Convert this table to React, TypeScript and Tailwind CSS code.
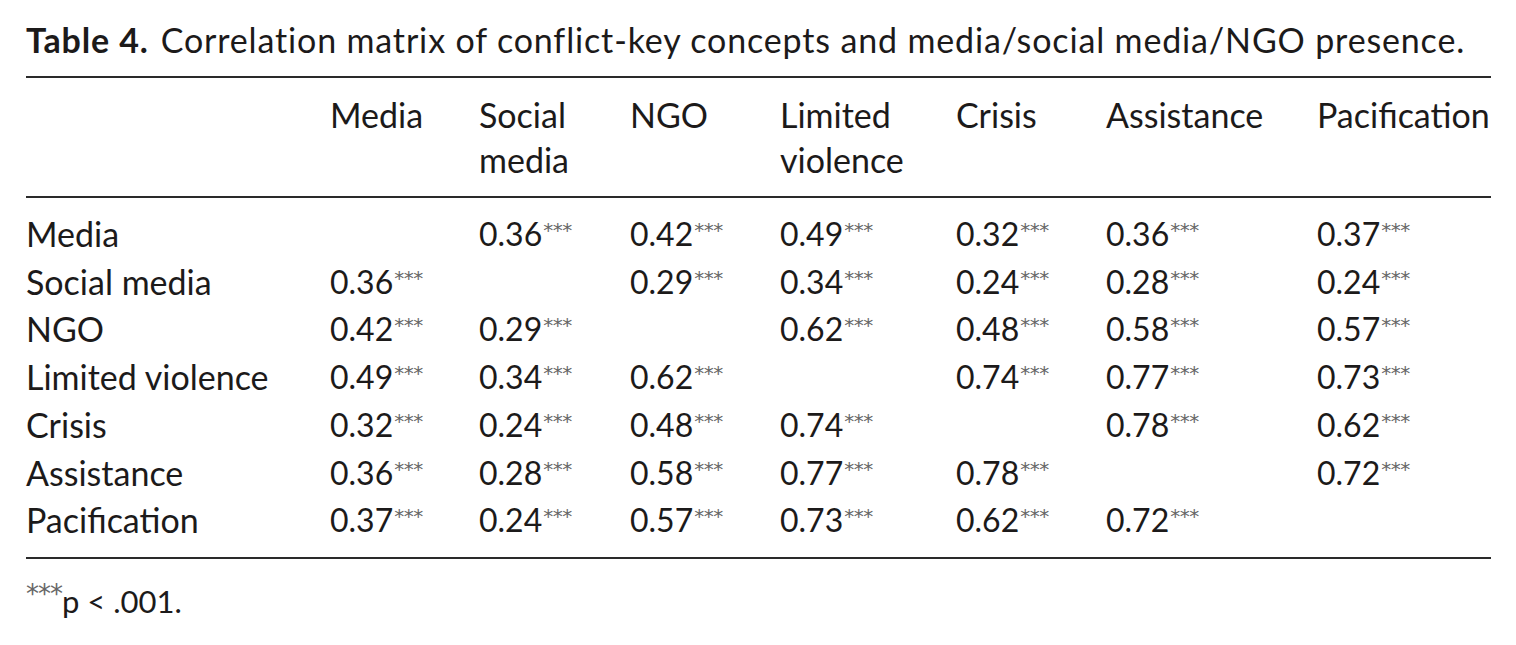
import React from "react";

const cols = ["Media", "Social media", "NGO", "Limited violence", "Crisis", "Assistance", "Pacification"];
const headers: React.ReactNode[] = [
  "Media",
  <>Social<br />media</>,
  "NGO",
  <>Limited<br />violence</>,
  "Crisis",
  "Assistance",
  "Pacification",
];

const data: (string | null)[][] = [
  [null, "0.36", "0.42", "0.49", "0.32", "0.36", "0.37"],
  ["0.36", null, "0.29", "0.34", "0.24", "0.28", "0.24"],
  ["0.42", "0.29", null, "0.62", "0.48", "0.58", "0.57"],
  ["0.49", "0.34", "0.62", null, "0.74", "0.77", "0.73"],
  ["0.32", "0.24", "0.48", "0.74", null, "0.78", "0.62"],
  ["0.36", "0.28", "0.58", "0.77", "0.78", null, "0.72"],
  ["0.37", "0.24", "0.57", "0.73", "0.62", "0.72", null],
];

const gridCols = "grid grid-cols-[304px_149px_151px_150px_176px_150px_211px_173px]";

function Stars() {
  return (
    <span
      className="relative top-[-9px] ml-[1px] text-[20px] leading-none tracking-[-0.5px] text-[#666]"
      style={{ fontFamily: "'DejaVu Sans', sans-serif" }}
    >
      ***
    </span>
  );
}

export default function App() {
  return (
    <div
      className="w-[1516px] h-[645px] overflow-hidden bg-white text-[#1c1a1a] px-[26px] pt-[20px]"
      style={{ fontFamily: "Lato, 'Open Sans', sans-serif" }}
    >
      <div className="w-[1465px]">
        <div className="text-[34px] leading-[40px] whitespace-nowrap tracking-[0.85px]">
          <span className="font-bold">Table 4.</span>
          <span className="ml-[12px]">Correlation matrix of conflict-key concepts and media/social media/NGO presence.</span>
        </div>
        <div className="mt-[16px] border-t-2 border-[#2a2a2a]" />
        <div className={`${gridCols} text-[34px] leading-[45px] pt-[14px] pb-[14px]`}>
          <div />
          {headers.map((h, i) => (
            <div key={i} className="whitespace-nowrap">{h}</div>
          ))}
        </div>
        <div className="border-t-2 border-[#2a2a2a]" />
        <div className="pt-[12px] pb-[13px]">
          {cols.map((row, r) => (
            <div key={row} className={`${gridCols} leading-[47.7px]`}>
              <div className="whitespace-nowrap text-[34px]">{row}</div>
              {data[r].map((v, c) => (
                <div key={c} className="whitespace-nowrap text-[32px]">
                  {v && (
                    <>
                      {v}
                      <Stars />
                    </>
                  )}
                </div>
              ))}
            </div>
          ))}
        </div>
        <div className="border-t-2 border-[#2a2a2a]" />
        <div className="mt-[22px] text-[31px] leading-[40px] whitespace-nowrap">
          <span
            className="relative top-[-10px] text-[26px] leading-none tracking-[-1px] text-[#666]"
            style={{ fontFamily: "'DejaVu Sans', sans-serif" }}
          >
            ***
          </span>
          <span>p &lt; .001.</span>
        </div>
      </div>
    </div>
  );
}
